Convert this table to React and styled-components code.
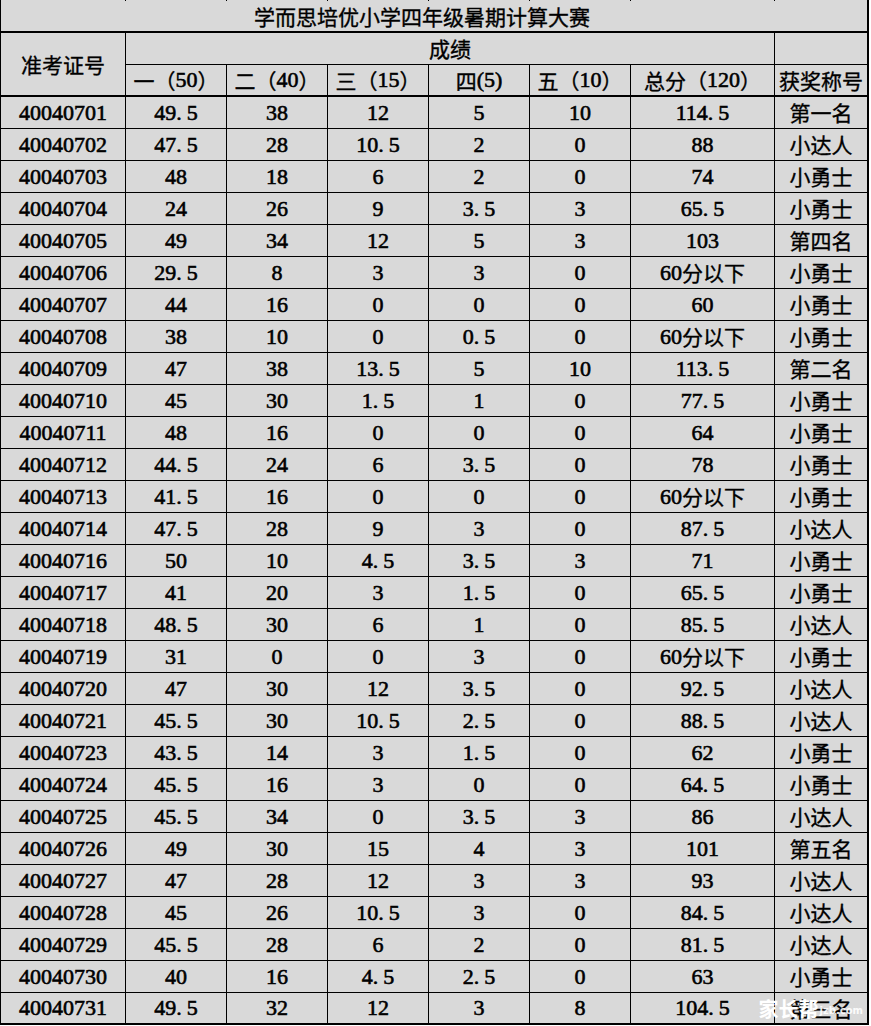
import React from 'react';
import styled, { createGlobalStyle } from 'styled-components';

const GlobalStyle = createGlobalStyle`
  html, body {
    margin: 0;
    padding: 0;
    background: #fff;
  }
  body {
    font-family: "Liberation Serif", "Noto Sans CJK SC", serif;
  }
`;

const COLS = '125px 101px 101px 101px 101px 101px 144px 92px';

const Sheet = styled.div`
  position: relative;
  display: grid;
  width: max-content;
  grid-template-columns: ${COLS};
  grid-template-rows: 1px repeat(32, 32px);
  border-left: 1px solid #000;
  border-right: 2px solid #000;
  background: #d9d9d9;
  color: #000;
`;

const Stub = styled.div`
  border-right: ${({ $last }) => ($last ? 'none' : '1px solid #000')};
`;

const Cell = styled.div`
  box-sizing: border-box;
  display: flex;
  align-items: center;
  justify-content: center;
  grid-column: ${({ $col }) => $col || 'auto'};
  grid-row: ${({ $row }) => $row || 'auto'};
  border-right: ${({ $last }) => ($last ? 'none' : '1px solid #000')};
  border-bottom: ${({ $bottom }) => $bottom || 1}px solid #000;
  padding: ${({ $pad }) => $pad || '0'};
  font-size: 22px;
  font-weight: 400;
  -webkit-text-stroke: 0.6px #000;
  line-height: 1;
  white-space: nowrap;
`;

const Han = styled.span`
  font-family: "Noto Sans CJK SC", sans-serif;
  font-weight: 400;
  font-size: 21px;
  -webkit-text-stroke: 0.35px #000;
`;

const Dot = styled.span`
  padding-right: 5px;
`;

const Watermark = styled.div`
  position: absolute;
  right: 4px;
  bottom: 6px;
  display: flex;
  align-items: flex-end;
  gap: 1px;
  color: #fff;
  -webkit-text-stroke: 0;
  pointer-events: none;
`;

const MarkName = styled.span`
  font-family: "Noto Sans CJK SC", sans-serif;
  font-size: 20px;
  font-weight: 700;
  line-height: 1;
`;

const MarkSite = styled.span`
  font-family: "DejaVu Sans", sans-serif;
  font-size: 10px;
  font-weight: 700;
  line-height: 1;
  margin-bottom: 3px;
  opacity: 0.9;
`;

const splitText = (s) =>
  s
    .split(/([\u4e00-\u9fff\uff08\uff09]+|\.)/)
    .filter(Boolean)
    .map((part, i) => {
      if (/[\u4e00-\u9fff\uff08\uff09]/.test(part)) return <Han key={i}>{part}</Han>;
      if (part === '.') return <Dot key={i}>.</Dot>;
      return part;
    });

const subHeads = ['一（50）', '二（40）', '三（15）', '四(5)', '五（10）', '总分（120）', '获奖称号'];

const rows = [
  ['40040701', '49.5', '38', '12', '5', '10', '114.5', '第一名'],
  ['40040702', '47.5', '28', '10.5', '2', '0', '88', '小达人'],
  ['40040703', '48', '18', '6', '2', '0', '74', '小勇士'],
  ['40040704', '24', '26', '9', '3.5', '3', '65.5', '小勇士'],
  ['40040705', '49', '34', '12', '5', '3', '103', '第四名'],
  ['40040706', '29.5', '8', '3', '3', '0', '60分以下', '小勇士'],
  ['40040707', '44', '16', '0', '0', '0', '60', '小勇士'],
  ['40040708', '38', '10', '0', '0.5', '0', '60分以下', '小勇士'],
  ['40040709', '47', '38', '13.5', '5', '10', '113.5', '第二名'],
  ['40040710', '45', '30', '1.5', '1', '0', '77.5', '小勇士'],
  ['40040711', '48', '16', '0', '0', '0', '64', '小勇士'],
  ['40040712', '44.5', '24', '6', '3.5', '0', '78', '小勇士'],
  ['40040713', '41.5', '16', '0', '0', '0', '60分以下', '小勇士'],
  ['40040714', '47.5', '28', '9', '3', '0', '87.5', '小达人'],
  ['40040716', '50', '10', '4.5', '3.5', '3', '71', '小勇士'],
  ['40040717', '41', '20', '3', '1.5', '0', '65.5', '小勇士'],
  ['40040718', '48.5', '30', '6', '1', '0', '85.5', '小达人'],
  ['40040719', '31', '0', '0', '3', '0', '60分以下', '小勇士'],
  ['40040720', '47', '30', '12', '3.5', '0', '92.5', '小达人'],
  ['40040721', '45.5', '30', '10.5', '2.5', '0', '88.5', '小达人'],
  ['40040723', '43.5', '14', '3', '1.5', '0', '62', '小勇士'],
  ['40040724', '45.5', '16', '3', '0', '0', '64.5', '小勇士'],
  ['40040725', '45.5', '34', '0', '3.5', '3', '86', '小达人'],
  ['40040726', '49', '30', '15', '4', '3', '101', '第五名'],
  ['40040727', '47', '28', '12', '3', '3', '93', '小达人'],
  ['40040728', '45', '26', '10.5', '3', '0', '84.5', '小达人'],
  ['40040729', '45.5', '28', '6', '2', '0', '81.5', '小达人'],
  ['40040730', '40', '16', '4.5', '2.5', '0', '63', '小勇士'],
  ['40040731', '49.5', '32', '12', '3', '8', '104.5', '第三名'],
];

const App = () => (
  <>
    <GlobalStyle />
    <Sheet>
      {Array.from({ length: 8 }, (_, i) => (
        <Stub key={`s${i}`} $last={i === 7} />
      ))}

      <Cell $col="1 / -1" $bottom={2} $last $pad="0 24px 0 0">
        {splitText('学而思培优小学四年级暑期计算大赛')}
      </Cell>

      <Cell $row="span 2" $bottom={2}>{splitText('准考证号')}</Cell>
      <Cell $col="span 6">{splitText('成绩')}</Cell>
      <Cell $last />
      {subHeads.map((h, i) => (
        <Cell key={h} $bottom={2} $last={i === subHeads.length - 1}>
          {splitText(h)}
        </Cell>
      ))}

      {rows.map((row, r) =>
        row.map((v, c) => (
          <Cell
            key={`${r}-${c}`}
            $bottom={r === rows.length - 1 ? 2 : 1}
            $last={c === row.length - 1}
          >
            {splitText(v)}
          </Cell>
        ))
      )}

      <Watermark>
        <MarkName>家长帮</MarkName>
        <MarkSite>jzb.com</MarkSite>
      </Watermark>
    </Sheet>
  </>
);

export default App;
